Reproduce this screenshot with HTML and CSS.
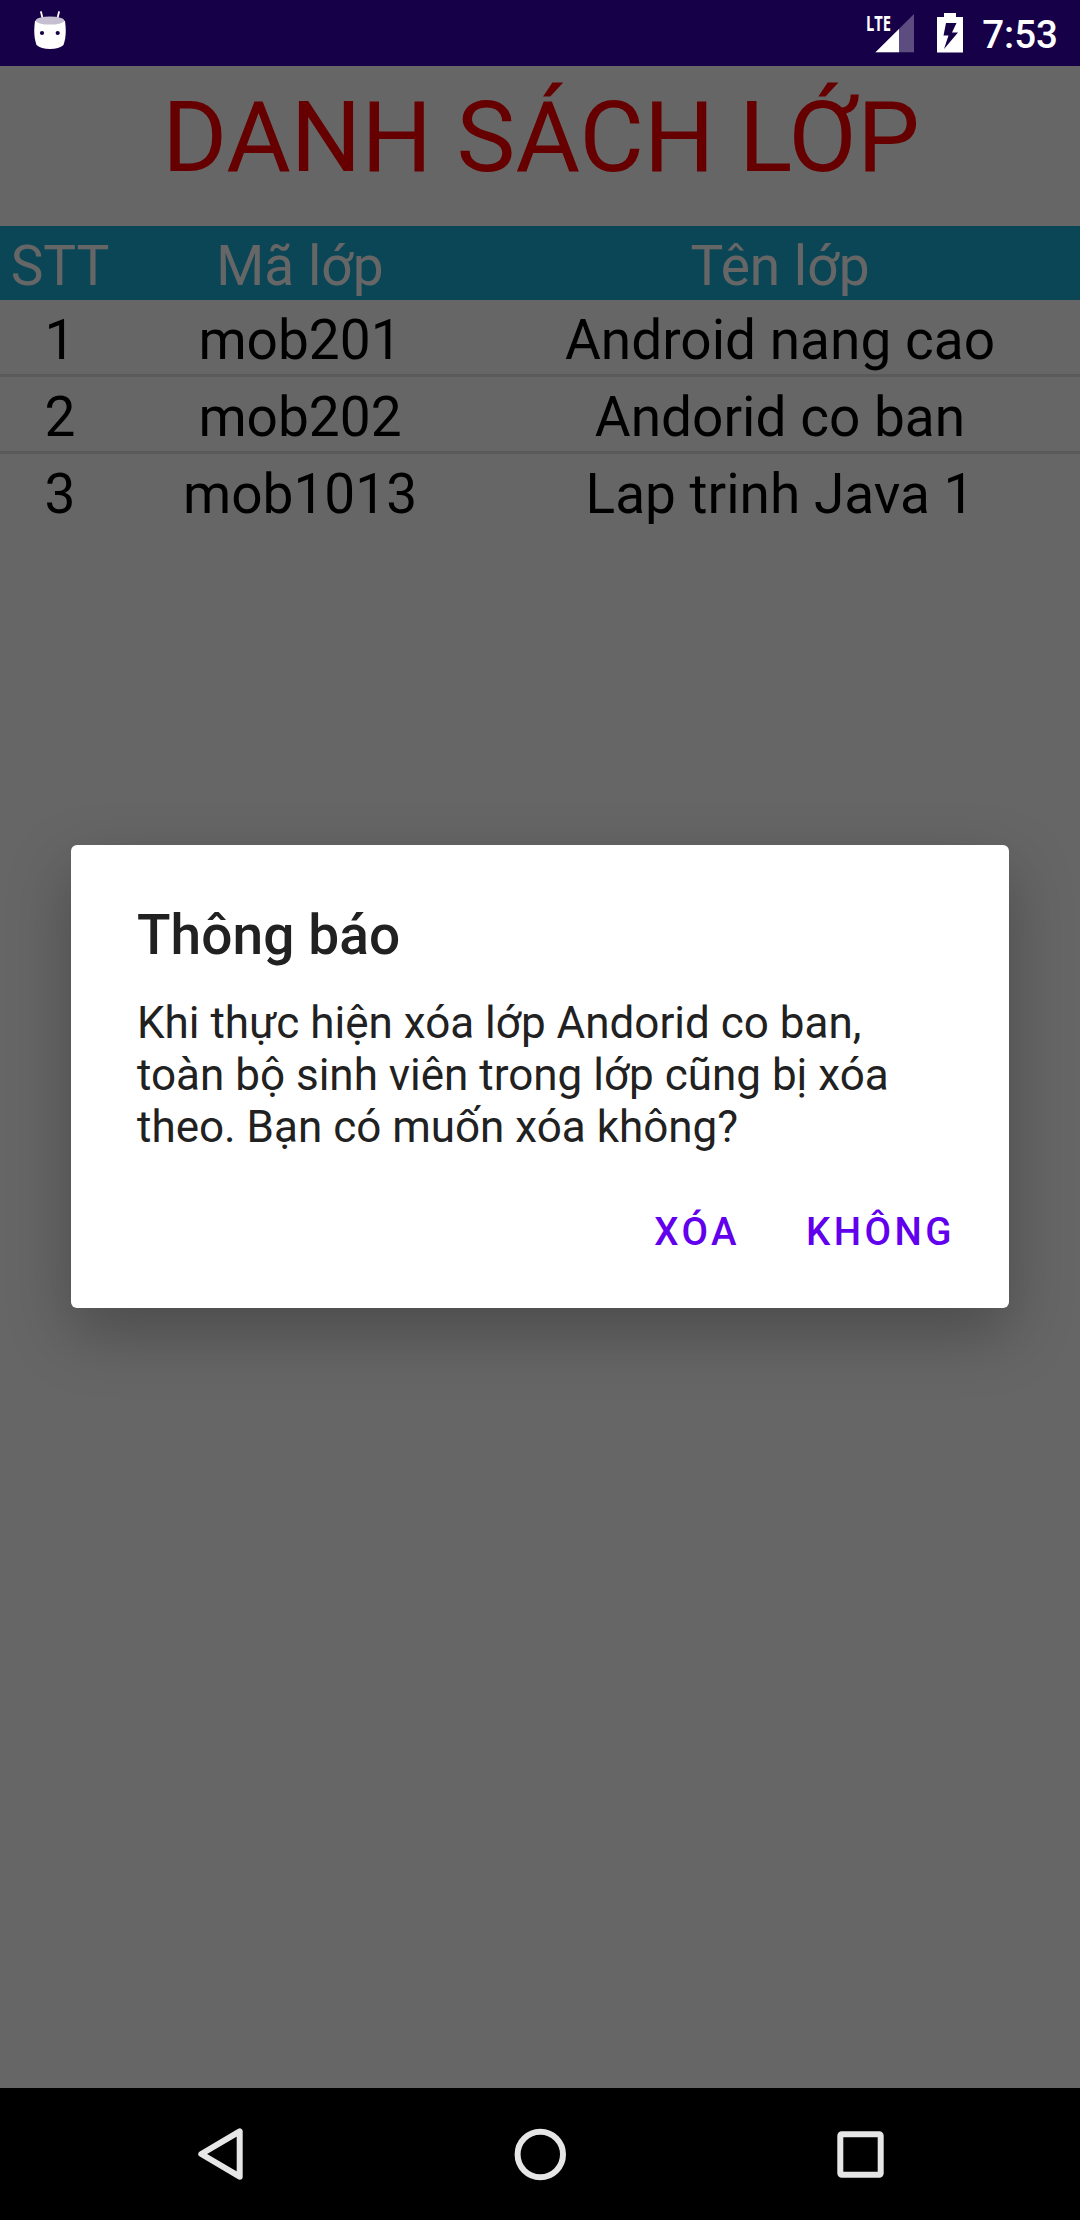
FILE: index.html
```html
<!DOCTYPE html>
<html lang="vi">
<head>
<meta charset="utf-8">
<title>Danh sách lớp</title>
<link rel="stylesheet" href="styles.css">
</head>
<body>
<div class="phone">
  <header class="status">
    <svg class="status-app" width="32" height="38" viewBox="0 0 32 38">
      <path d="M7 1l2 8M25 1l-2 8" stroke="#fff" stroke-width="1.8" stroke-linecap="round"/>
      <path d="M1 10Q16 4 31 10C32.300 19 32 27 29.500 34Q25 38 16 38T2.500 34C0 27-.3 19 1 10z" fill="#fff"/>
      <ellipse cx="16" cy="9.600" rx="14.300" ry="4" fill="#c5bfd1"/>
      <circle cx="8" cy="22" r="2.100" fill="#160048"/>
      <circle cx="23.700" cy="22" r="2.100" fill="#160048"/>
    </svg>
    <div class="status-right">
      <svg class="signal" width="49" height="40" viewBox="0 0 49 40">
        <path d="M48 1v38.300H9.500z" fill="#5c4c7f"/>
        <path d="M33 16v23.300H9.500z" fill="#fff"/>
        <text class="lte" x="0" y="18" textLength="25" lengthAdjust="spacingAndGlyphs">LTE</text>
      </svg>
      <svg width="26" height="40" viewBox="0 0 26 40">
        <path fill-rule="evenodd" fill="#fff" d="M7 0h12v4h7v35.500H0V4h7zM9 10L6.500 22.500h5L7 36 21 19.500h-6L19.500 10z"/>
      </svg>
      <span class="clock">7:53</span>
    </div>
  </header>

  <main class="app">
    <h1 class="title">DANH SÁCH LỚP</h1>
    <div class="row row-head"><span>STT</span><span>Mã lớp</span><span>Tên lớp</span></div>
    <div class="list">
      <div class="row"><span>1</span><span>mob201</span><span>Android nang cao</span></div>
      <div class="row"><span>2</span><span>mob202</span><span>Andorid co ban</span></div>
      <div class="row"><span>3</span><span>mob1013</span><span>Lap trinh Java 1</span></div>
    </div>
    <div class="scrim">
      <section class="dialog" role="alertdialog">
        <h2 class="dialog-title">Thông báo</h2>
        <p class="dialog-text">Khi thực hiện xóa lớp Andorid co ban, toàn bộ sinh viên trong lớp cũng bị xóa theo. Bạn có muốn xóa không?</p>
        <div class="dialog-actions">
          <button class="btn">XÓA</button>
          <button class="btn">KHÔNG</button>
        </div>
      </section>
    </div>
  </main>

  <nav class="navbar">
    <svg width="60" height="60" viewBox="0 0 60 60"><path d="M49.700 7.300v45.400L11.300 30z"/></svg>
    <svg width="60" height="60" viewBox="0 0 60 60"><circle cx="30.300" cy="30.500" r="22.700"/></svg>
    <svg width="60" height="60" viewBox="0 0 60 60"><rect x="10.300" y="10.300" width="40.400" height="40.400" rx="1.500"/></svg>
  </nav>
</div>
</body>
</html>
```
FILE: styles.css
```css
* { box-sizing: border-box; }
body {
  margin: 0;
  font-family: Roboto, sans-serif;
  color: #000;
}
.phone {
  display: flex;
  flex-direction: column;
  width: 1080px;
  height: 2220px;
  overflow: hidden;
}
.status {
  flex: none;
  display: flex;
  justify-content: space-between;
  height: 66px;
  padding: 11px 22px 0 34px;
  background: #160048;
  color: #fff;
}
.status-right {
  display: flex;
  gap: 22px;
  padding-top: 2px;
}
.status-right .clock { margin-left: -3px; }
.signal { overflow: visible; }
.lte {
  font: 700 22px "Open Sans", sans-serif;
  fill: #fff;
}
.clock {
  font-size: 38.5px;
  font-weight: 500;
  line-height: 44px;
}
.app {
  position: relative;
  flex: 1;
  background: #fff;
}
.title {
  height: 160px;
  margin: 0;
  padding: 13px 0 0 2px;
  font-size: 99px;
  font-weight: 400;
  line-height: 116px;
  text-align: center;
  color: #f00;
}
.row {
  display: grid;
  grid-template-columns: 1fr 3fr 5fr;
  height: 74px;
  padding-top: 6px;
  font-size: 55px;
  line-height: 68px;
  text-align: center;
}
.row-head {
  background: #1baed8;
  color: #fff;
}
.list .row + .row {
  height: 77px;
  border-top: 3px solid #e0e0e0;
}
.scrim {
  position: absolute;
  inset: 0;
  display: flex;
  align-items: center;
  justify-content: center;
  padding-bottom: 1px;
  background: rgba(0, 0, 0, .6);
}
.dialog {
  width: 938px;
  height: 463px;
  padding: 57px 32px 0 66px;
  border-radius: 6px;
  background: #fff;
  color: #212121;
  box-shadow: 0 24px 64px rgba(0, 0, 0, .27);
}
.dialog-title {
  margin: 0;
  font-size: 55px;
  font-weight: 500;
  line-height: 66px;
  letter-spacing: .1px;
}
.dialog-text {
  width: 780px;
  margin: 29px 0 0;
  font-size: 44px;
  line-height: 52px;
}
.dialog-actions {
  display: flex;
  justify-content: flex-end;
  margin-top: 34px;
  gap: 22px;
}
.btn {
  padding: 22px;
  border: 0;
  background: none;
  font: 500 38.5px/45px Roboto, sans-serif;
  letter-spacing: .0893em;
  color: #6200ee;
}
.navbar {
  flex: none;
  display: flex;
  align-items: center;
  justify-content: space-between;
  height: 132px;
  padding: 0 190px;
  background: #000;
}
.navbar svg {
  fill: none;
  stroke: #e6e6e6;
  stroke-width: 6;
  stroke-linejoin: round;
}
```
